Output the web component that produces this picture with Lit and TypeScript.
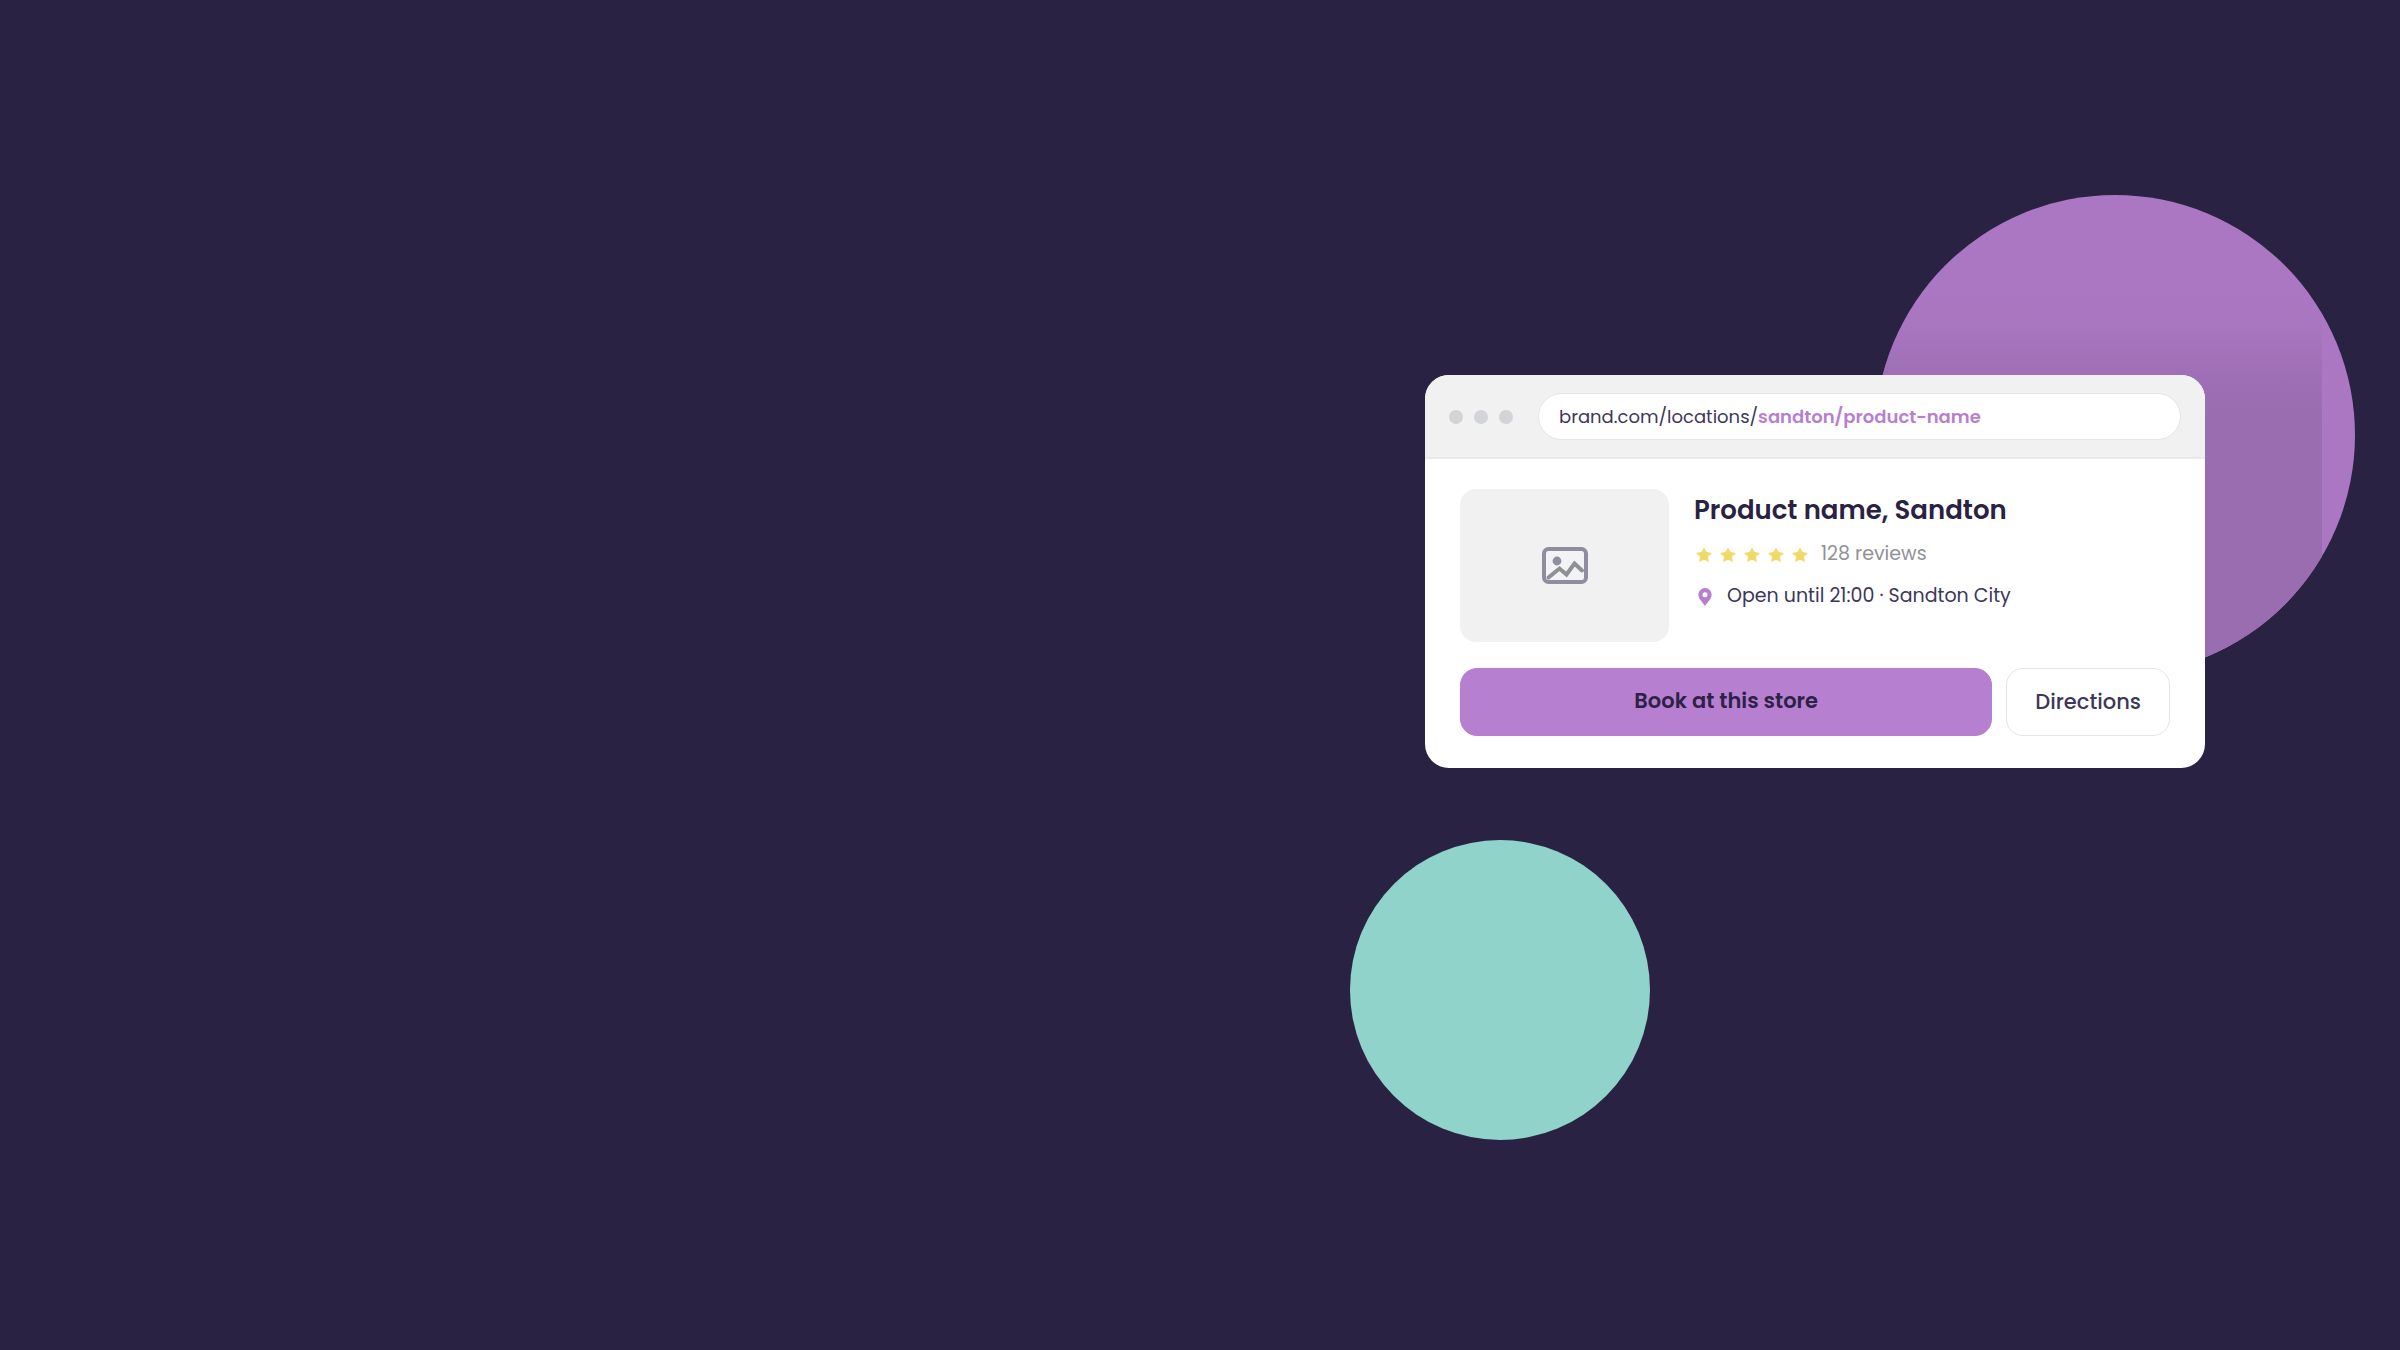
import { LitElement, html, css } from "lit";
import { customElement, property } from "lit/decorators.js";

@customElement("star-rating")
class StarRating extends LitElement {
  @property({ type: Number }) value = 5;

  static styles = css`
    :host {
      display: flex;
      gap: 8px;
      padding: 2px 0 0 2px;
    }
    .star {
      display: block;
      width: 16px;
      height: 16px;
      fill: #f2da69;
    }
  `;

  render() {
    return Array.from(
      { length: this.value },
      () => html`<svg class="star" viewBox="0 0 16 16" aria-hidden="true">
        <path
          d="M8 .3l2.500 4.800 5.400.8-3.900 3.800.9 5.400L8 12.700l-4.900 2.400.9-5.400L.1 5.900l5.400-.8z"
        />
      </svg>`
    );
  }
}

@customElement("store-card")
class StoreCard extends LitElement {
  static styles = css`
    :host {
      display: block;
      overflow: hidden;
      border-radius: 24px;
      background: #ffffff;
      color: #3d3759;
      font-size: 19px;
      line-height: 30px;
    }
    .bar {
      display: flex;
      align-items: center;
      gap: 25px;
      padding: 18px 24px 17px;
      background: #f1f1f2;
      border-bottom: 2px solid #e9e9ea;
    }
    .dots {
      display: flex;
      gap: 11px;
    }
    .dot {
      width: 14px;
      height: 14px;
      border-radius: 50%;
      background: #d3d4d8;
    }
    .address {
      flex: 1;
      padding: 8px 20px 7px;
      border: 1px solid #e4e4e6;
      border-radius: 24px;
      background: #ffffff;
      color: inherit;
      font-size: 18px;
      text-decoration: none;
    }
    .slug {
      color: #b77fd0;
      font-weight: 600;
    }
    .body {
      display: grid;
      gap: 26px;
      padding: 30px 35px 32px;
    }
    .product {
      display: flex;
      gap: 25px;
    }
    .thumb {
      display: grid;
      place-items: center;
      width: 209px;
      height: 153px;
      border-radius: 16px;
      background: #f1f1f2;
    }
    .picture {
      width: 46px;
      height: 37px;
    }
    .info {
      display: flex;
      flex-direction: column;
      gap: 8px;
    }
    .facts {
      display: grid;
      gap: 12px;
    }
    .title {
      margin: 0;
      color: #292242;
      font-size: 26px;
      font-weight: 600;
      line-height: 42px;
    }
    .row {
      display: flex;
      align-items: center;
    }
    .reviews {
      padding-left: 13px;
      color: #919196;
    }
    .pin {
      width: 14px;
      height: 18px;
      margin: 2px 15px 0 4px;
    }
    .actions {
      display: flex;
      gap: 14px;
    }
    .button {
      box-sizing: border-box;
      height: 68px;
      padding: 0 28px;
      border: 1px solid #e4e4e6;
      border-radius: 17px;
      background: #ffffff;
      color: inherit;
      font: inherit;
      font-size: 21px;
      font-weight: 500;
      cursor: pointer;
    }
    .primary {
      flex: 1;
      padding-bottom: 2px;
      border-color: #b77fd0;
      background: #b77fd0;
      color: #2d2148;
      font-weight: 600;
    }
  `;

  render() {
    return html`
      <header class="bar">
        <div class="dots">
          <span class="dot"></span><span class="dot"></span><span class="dot"></span>
        </div>
        <a class="address" href="#product"
          >brand.com/locations/<span class="slug">sandton/product-name</span></a
        >
      </header>
      <div class="body" id="product">
        <div class="product">
          <div class="thumb">
            <svg class="picture" viewBox="0 0 46 37" aria-hidden="true">
              <rect x="2" y="2" width="42" height="33" rx="4.5" fill="#f3f3f6" stroke="#8f8d9e" stroke-width="4" />
              <circle cx="15" cy="14" r="4.4" fill="#8f8d9e" />
              <path d="M6.500 30.500 17.500 21.500 24.500 27.500 32.500 16.500 40 23.500" fill="none" stroke="#8f9096" stroke-width="4" stroke-linecap="round" />
            </svg>
          </div>
          <div class="info">
            <h1 class="title">Product name, Sandton</h1>
            <div class="facts">
              <div class="row">
                <star-rating .value=${5}></star-rating>
                <span class="reviews">128 reviews</span>
              </div>
              <div class="row">
                <svg class="pin" viewBox="0 0 14 18" aria-hidden="true">
                  <path
                    d="M7 0A6.600 6.600 0 0 0 .4 6.700C.4 11 4.500 14 7 18c2.500-4 6.600-7 6.600-11.300A6.600 6.600 0 0 0 7 0z"
                    fill="#b77fd0"
                  />
                  <circle cx="7" cy="6.700" r="2.500" fill="#ffffff" />
                </svg>
                <span>Open until 21:00 · Sandton City</span>
              </div>
            </div>
          </div>
        </div>
        <div class="actions">
          <button class="button primary" type="button">Book at this store</button>
          <button class="button" type="button">Directions</button>
        </div>
      </div>
    `;
  }
}

@customElement("app-root")
class AppRoot extends LitElement {
  static styles = css`
    :host {
      display: block;
      box-sizing: border-box;
      min-height: 100vh;
      padding: 375px 195px 0;
      overflow: hidden;
      background: #292242;
      font-family: Poppins, Inter, "Open Sans", sans-serif;
    }
    .stage {
      position: relative;
      max-width: 780px;
      margin-left: auto;
    }
    .card {
      position: relative;
    }
    .circle {
      position: absolute;
      overflow: hidden;
      border-radius: 50%;
    }
    .purple {
      top: -180px;
      right: -150px;
      width: 480px;
      height: 480px;
      background: #ab77c2;
    }
    .shade {
      height: 100%;
      margin-right: 33px;
      background: linear-gradient(
        #9a6cb000 95px,
        #9a6cb026 130px,
        #9a6cb099 170px,
        #9a6cb0e6 200px,
        #9a6cb0 235px
      );
    }
    .teal {
      top: 465px;
      left: -75px;
      width: 300px;
      height: 300px;
      background: #8fd3ca;
    }
  `;

  render() {
    return html`
      <main class="stage">
        <div class="circle purple"><div class="shade"></div></div>
        <div class="circle teal"></div>
        <store-card class="card"></store-card>
      </main>
    `;
  }
}
